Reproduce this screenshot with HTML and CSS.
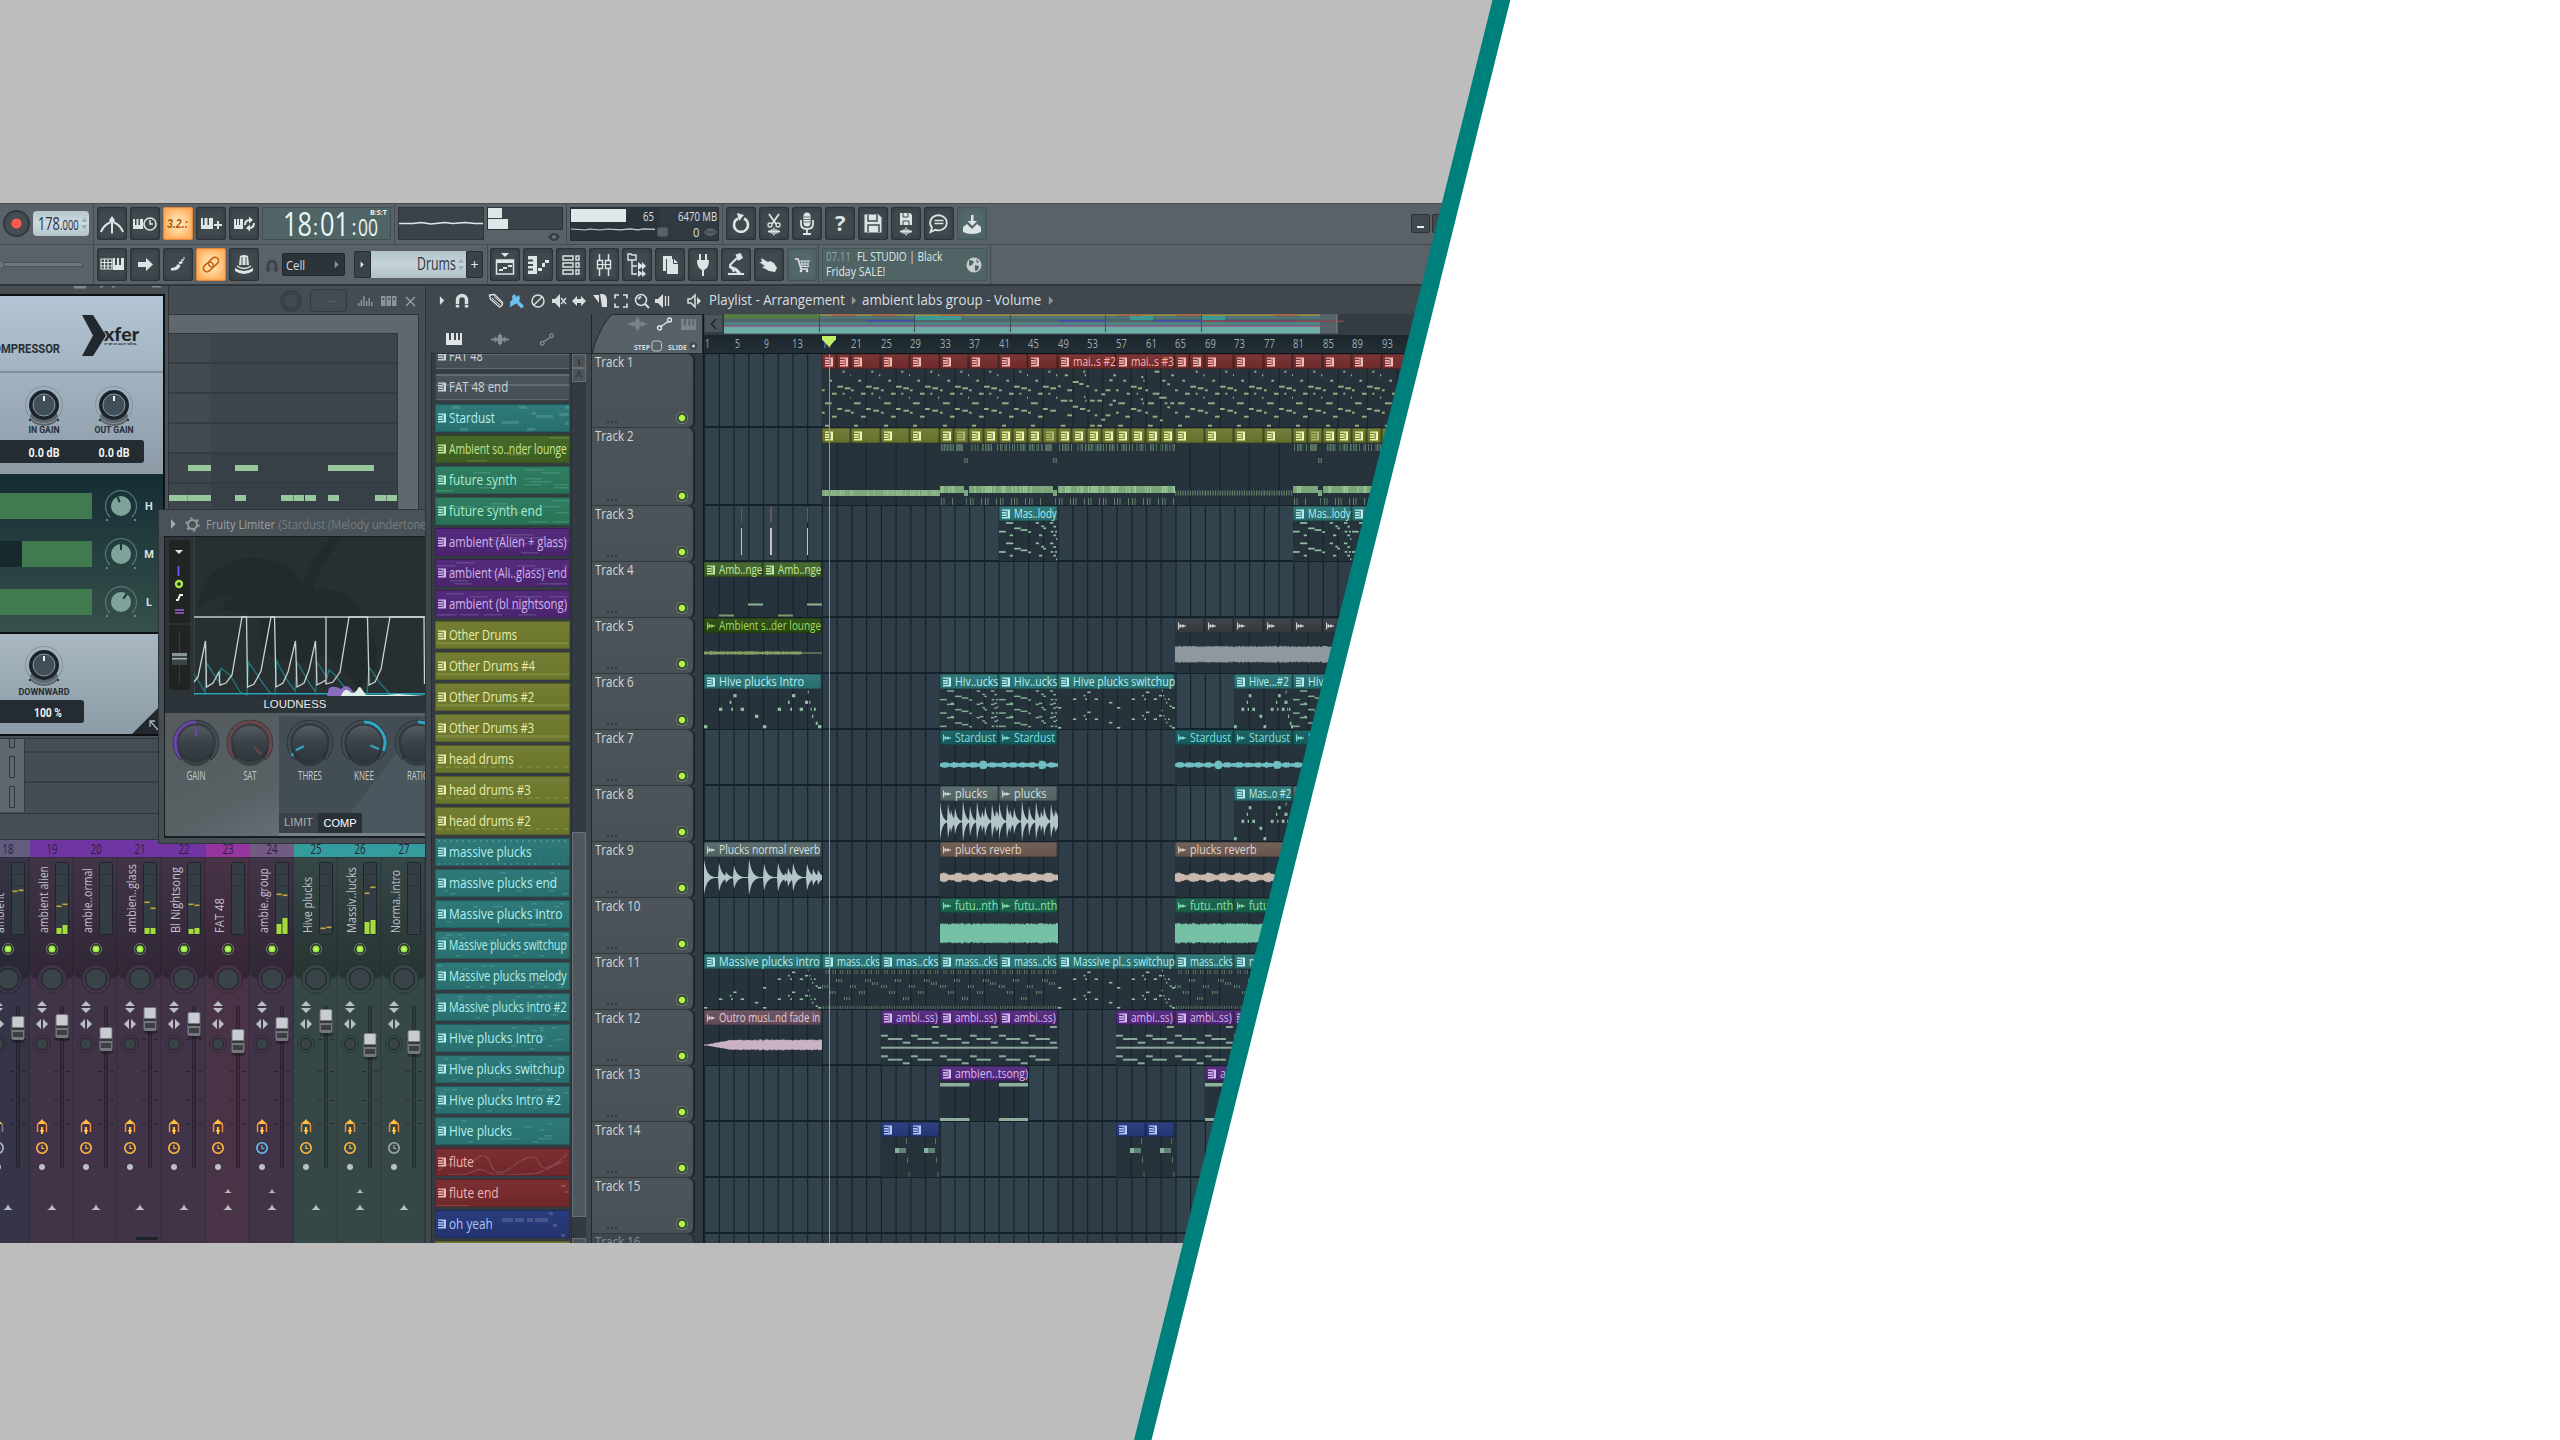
FILE: index.html
```html
<!DOCTYPE html>
<html lang="en">
<head>
<meta charset="utf-8">
<title>FL Studio - ambient labs group</title>
<link rel="stylesheet" href="styles.css">
</head>
<body>
<svg class="defs" aria-hidden="true">
  <symbol id="i-metro" viewBox="0 0 30 33"><path d="M4 25Q6.500 18 13 15.500M26 25Q23.500 18 17 15.500" fill="none" stroke="currentColor" stroke-width="2"/><path d="M15 9l3 4.500-2 3v10h-2v-10l-2-3z"/></symbol>
  <symbol id="i-keyclock" viewBox="0 0 30 33"><path d="M3 12h2v6h1.500v-6h2v6H10v-6h3v10H3z"/><circle cx="20" cy="17" r="6" fill="none" stroke="currentColor" stroke-width="1.600"/><path d="M20 13v4h3" fill="none" stroke="currentColor" stroke-width="1.500"/></symbol>
  <symbol id="i-keyplus" viewBox="0 0 30 33"><path d="M5 11h2v7h1.500v-7h3v7H13v-7h4v11H5zM21 14h2v3h3v2h-3v3h-2v-3h-3v-2h3z"/></symbol>
  <symbol id="i-keyloop" viewBox="0 0 30 33"><path d="M5 12h2v6h1v-6h2v6h1v-6h3v10H5z"/><path d="M16 18q0-5 5-5M25 16q0 5-5 5" fill="none" stroke="currentColor" stroke-width="2"/><path d="M20 9.500l4 3.500-4 3.500zM21 17.500l-4 3.500 4 3.500z"/></symbol>
  <symbol id="i-gridkeys" viewBox="0 0 30 33"><path d="M4 11h11v10H4zM4 14.500h11M4 18h11M7.500 11v10M11 11v10" fill="none" stroke="currentColor" stroke-width="1.200"/><path d="M16 10h2v7h2v-7h2v7h2v-7h3v12H16z"/></symbol>
  <symbol id="i-arrow" viewBox="0 0 30 33"><path d="M8 14h8v-4l7 6.500-7 6.500v-4H8z"/></symbol>
  <symbol id="i-slide" viewBox="0 0 30 33"><path d="M8 20q5 0 6.500-4l3 1.500q-1.500 5.500-9.500 5z"/><path d="M15.500 14l3.500-1 1 2-3.500 1.500zM18 11.500l2.500-.5.500 1.500-2.500.5zM20 9.500h2v1h-2z"/></symbol>
  <symbol id="i-link" viewBox="0 0 30 33"><g fill="none" stroke="currentColor" stroke-width="1.600" transform="rotate(-42 15 16.500)"><rect x="6" y="13" width="11" height="7" rx="3.500"/><rect x="13" y="13" width="11" height="7" rx="3.500"/></g></symbol>
  <symbol id="i-hat" viewBox="0 0 30 33"><path d="M11 8q4-2 8 0l1 9H10z"/><path d="M6 20q9 6 18 0v3q-9 6-18 0z"/><path d="M13 9v9M17 9v9" stroke="#4a5358" stroke-width="1"/><path d="M8 18q7 5 14 0" fill="none" stroke="currentColor" stroke-width="1.500"/></symbol>
  <symbol id="i-magnet" viewBox="0 0 16 16"><path d="M3.500 14.500V7a4.500 4.500 0 0 1 9 0v7.500" fill="none" stroke="currentColor" stroke-width="3.400"/><path d="M1 11.500h14" stroke="#40484e" stroke-width=".8"/></symbol>
  <symbol id="i-undo" viewBox="0 0 30 33"><path d="M18 11.500a7 7 0 1 1-6 0" fill="none" stroke="currentColor" stroke-width="2.500"/><path d="M11 6l7 2-5 6z"/></symbol>
  <symbol id="i-cut" viewBox="0 0 30 33"><path d="M10 7l7 10M20 7l-7 10" stroke="currentColor" stroke-width="1.800"/><circle cx="11" cy="18" r="2" fill="none" stroke="currentColor" stroke-width="1.300"/><circle cx="19" cy="18" r="2" fill="none" stroke="currentColor" stroke-width="1.300"/><path d="M9 24.500h12M11 23v3M13 22v5M15 20.500v8M17 22v5M19 23v3" stroke="currentColor" stroke-width="1.300"/></symbol>
  <symbol id="i-mic" viewBox="0 0 30 33"><rect x="11.500" y="5.500" width="7" height="14" rx="3.500"/><path d="M9 13v4q0 5 6 5t6-5v-4M15 22v4M11 27h8" fill="none" stroke="currentColor" stroke-width="1.800"/><path d="M12 10h6M12 12.500h6M12 15h6" stroke="#4a5358" stroke-width=".8"/></symbol>
  <symbol id="i-save" viewBox="0 0 30 33"><path d="M6.500 7.500h14l3 3v15h-17z"/><path d="M10 8v6h9V8M10 25v-7h11v7" fill="none" stroke="#41494e" stroke-width="1.500"/></symbol>
  <symbol id="i-savewav" viewBox="0 0 30 33"><path d="M9 6h10l2 2v10H9z"/><path d="M12 6v4h5V6M12 18v-4h6v4" fill="none" stroke="#41494e"/><path d="M9 24.500h12M11 23v3M13 22v5M15 20.500v8M17 22v5M19 23v3" stroke="currentColor" stroke-width="1.300"/></symbol>
  <symbol id="i-chat" viewBox="0 0 30 33"><path d="M6.500 25l1.500-4.500a8.300 7.500 0 1 1 3.500 2.300z" fill="none" stroke="currentColor" stroke-width="1.800"/><path d="M10.500 13.500h9M10.500 16.500h9" stroke="currentColor" stroke-width="1.500"/></symbol>
  <symbol id="i-down" viewBox="0 0 30 33"><path d="M14 8h2.500v6H20l-4.700 5L10.500 14H14zM6 20l4-3 5 5 5-5 4 3v5q-9 4-18 0z"/></symbol>
  <symbol id="i-playlist" viewBox="0 0 30 33"><path d="M11 5h8l-4 4z"/><path d="M6.500 12h17v14h-17z" fill="none" stroke="currentColor" stroke-width="1.500"/><path d="M6 12h18v3H6zM9 21h4v2H9zM13 19h4v2h-4zM18 17h4v2h-4z"/></symbol>
  <symbol id="i-proll" viewBox="0 0 30 33"><path d="M5 8h9v18H5v-3.500h5v-2H5v-2.500h5v-2H5v-2.500h5v-2H5zM15 20h4v3h-4zM19 15h3v4h-3zM22 12h4v3h-4z"/></symbol>
  <symbol id="i-rack" viewBox="0 0 30 33"><path d="M7 8h10v4H7zM7 15h10v4H7zM7 22h10v4H7zM20 8h3v4h-3zM20 15h3v4h-3zM20 22h3v4h-3z" fill="none" stroke="currentColor" stroke-width="1.400"/></symbol>
  <symbol id="i-mixer" viewBox="0 0 30 33"><path d="M10.500 6v22M19.500 6v22" stroke="currentColor" stroke-width="1.500"/><path d="M8.500 12.500h5v8h-5zM16.500 12.500h5v8h-5z" fill="#41494e" stroke="currentColor" stroke-width="1.400"/><path d="M8 16.500h14" stroke="currentColor"/></symbol>
  <symbol id="i-tree" viewBox="0 0 30 33"><path d="M6 6h3l1 1h4v5H6zM10 12v14h5M10 18h5" fill="none" stroke="currentColor" stroke-width="1.400"/><path d="M16 14l4 3v-3l4 4-4 4v-3l-4 3zM16 22l4 3v-3l4 4-4 3v-3l-4 3z"/></symbol>
  <symbol id="i-docs" viewBox="0 0 30 33"><path d="M8 8h9v3h-6v12H8z"/><path d="M12 11h7l4 4v11H12z"/><path d="M18.500 11v4.500H23" fill="none" stroke="#41494e"/></symbol>
  <symbol id="i-plug" viewBox="0 0 30 33"><path d="M11 6h2v6h4V6h2v6h2q0 8-5 10v6h-2v-6q-5-2-5-10h2z"/></symbol>
  <symbol id="i-lamp" viewBox="0 0 30 33"><path d="M14.500 6.500l5-1.500 2.500 5-5 3z"/><path d="M16 10l-7 7 4 7" fill="none" stroke="currentColor" stroke-width="2"/><path d="M8 18q8 0 12 7h3v2H7v-2h9q-3-4-8-5z"/></symbol>
  <symbol id="i-hand" viewBox="0 0 30 33"><path d="M7 10l7 4 2-1 4 2 3 5-2 4-6-1-7-4 3-1-6-4 3 0z"/></symbol>
  <symbol id="i-cart" viewBox="0 0 30 33"><path d="M8 11h3l3 10h7" fill="none" stroke="currentColor" stroke-width="1.500"/><path d="M12 13h11M13 16h9M14 18.500h8M15 13v6M18 13v6M21 13v6" stroke="currentColor"/><circle cx="14" cy="23" r="1.300"/><circle cx="20" cy="23" r="1.300"/></symbol>
  <symbol id="i-keys" viewBox="0 0 16 12"><path d="M0 0h3v7h2V0h3v7h2V0h2v7h2V0h2v12H0z"/></symbol>
  <symbol id="i-wave" viewBox="0 0 20 14"><path d="M0 7h20M2.500 6v2M4.500 4v6M6.500 5v4M8.500 2v10M10 0v14M11.500 2v10M13.500 5v4M15.500 4v6M17.500 6v2" stroke="currentColor" stroke-width="1.500"/></symbol>
  <symbol id="i-auto" viewBox="0 0 16 14"><g fill="none" stroke="currentColor" stroke-width="1.300"><circle cx="3" cy="11" r="2"/><circle cx="13" cy="3" r="2"/><path d="M4.500 9.500L11.500 4.500"/></g></symbol>
  <symbol id="i-pencil" viewBox="0 0 16 16"><path d="M1.500 2l5-.5 8 8q.5 3-3 4.500l-9-8z" fill="none" stroke="currentColor" stroke-width="1.400"/><path d="M4 5l8 7M6 3.500l8 7" stroke="currentColor"/></symbol>
  <symbol id="i-brush" viewBox="0 0 16 16"><path d="M3 3l3-2 1 3 3-2 1 4-1 2 5 5-2.500 2.500-5-5-2 1-5 3 1-4-1-1 3-3z"/></symbol>
  <symbol id="i-ban" viewBox="0 0 16 16"><circle cx="8" cy="8" r="6" fill="none" stroke="currentColor" stroke-width="1.500"/><path d="M4 12l8-8" stroke="currentColor" stroke-width="1.500"/></symbol>
  <symbol id="i-mute" viewBox="0 0 16 16"><path d="M1 6h3l5-5v14l-5-5H1z"/><path d="M10 5l5 6M15 5l-5 6" stroke="currentColor" stroke-width="1.400"/></symbol>
  <symbol id="i-lr" viewBox="0 0 16 16"><path d="M1 8l5-5v3h4V3l5 5-5 5v-3H6v3z"/></symbol>
  <symbol id="i-slice" viewBox="0 0 16 16"><path d="M1 2h6v8zM8 1h3q4 1 4 6v7h-5z"/></symbol>
  <symbol id="i-sel" viewBox="0 0 16 16"><path d="M2 5.500V2h4M10 2h4v3.500M14 10.500V14h-4M6 14H2v-3.500" fill="none" stroke="currentColor" stroke-width="1.700"/></symbol>
  <symbol id="i-mag" viewBox="0 0 16 16"><circle cx="7" cy="7" r="5.500" fill="none" stroke="currentColor" stroke-width="1.500"/><path d="M11 11l4 4M4 6l3-2.500" stroke="currentColor" stroke-width="2"/></symbol>
  <symbol id="i-play" viewBox="0 0 16 16"><path d="M1 6h3l5-5v14l-5-5H1z"/><path d="M11.500 3v10M14.500 3v10" stroke="currentColor" stroke-width="1.300"/></symbol>
  <symbol id="i-spk" viewBox="0 0 16 16"><path d="M2 6h3l4-4v12l-4-4H2z" fill="none" stroke="currentColor" stroke-width="1.500"/><path d="M11 4l4 4-4 4z"/></symbol>
  <symbol id="i-tri" viewBox="0 0 8 10"><path d="M1 0l5 5-5 5z"/></symbol>
  <symbol id="i-globe" viewBox="0 0 16 16"><circle cx="8" cy="8" r="7.500"/><path d="M3 3q4 0 5 2l-2 3-3 1zM9 8l4 1-1 4-3 1zM10 2l3 3-2 1z" fill="#516465"/></symbol>
  <symbol id="i-pat" viewBox="0 0 9 10"><path d="M0 0h9v10H0V8.400h4.800V7.200H0V5.600h4.800V4.400H0V2.800h4.800V1.400H0z"/><path d="M5.800 1.400v7.200" stroke="#203a50" stroke-width=".9"/></symbol>
  <symbol id="i-aud" viewBox="0 0 9 8"><path d="M.7 0v8M1 4h8" stroke="currentColor" stroke-width="1.200"/><path d="M2 1.500L4.500 4 2 6.500zM5 1.500L7.500 4 5 6.500z"/></symbol>
</svg>

<main class="poster">
<div class="daw">
  <div class="bar top">
    <div class="grp g-rec"><span class="rec"></span><span class="tempo"><b data-w="22">178</b><i data-w="19">.000</i><span class="spin"></span></span></div>
    <div class="grp g-trans" id="btnsA"></div>
    <div class="grp g-scope"><svg class="scope" viewBox="1 1 84 31"><path d="M1 16.500h14l8-1 10 1.500 14-1.500 8 1 12-1 10 1h8" fill="none" stroke="#dfe9e9" stroke-width="1.300"/></svg>
      <div class="peak"><div class="peakbox"><span></span><span></span></div><svg viewBox="0 0 12 10"><path d="M0 5q6-8 12 0-6 8-12 0z" fill="#363e44"/><circle cx="6" cy="5" r="2" fill="#6a7378"/></svg></div></div>
    <div class="grp g-cpu"><div class="cpu"><svg viewBox="0 0 85 33"><rect x="0" y="1" width="55" height="13" fill="#e0e8ea"/><path d="M0 21l8 .5 6 .5 5-1 10 1 8-1 12 .8 10-1 8 1 6-1 11 .5" fill="none" stroke="#c8d4d6" stroke-width="1.200"/></svg><em class="c65" data-w="11">65</em><div class="mem"><span data-w="39">6470 MB</span><span class="zero" data-w="6">0</span></div><svg class="chips" viewBox="0 0 62 14"><path d="M1 3h9v8H1zM0 5h11M0 8h11" fill="#59626a" stroke="#59626a"/><path d="M47 7q3-3 5-4 2 1 3 0 2 1 5 4-3 4-7 4t-6-4z" fill="#59626a"/><path d="M49 7h9" stroke="#323a41"/></svg></div></div>
    <div class="grp g-file" id="btnsB"></div>
    <div class="win"><span><i></i></span><span><i class="mx"></i></span></div>
  </div>
  <div class="bar low">
    <div class="grp g-rec"><span class="groove"></span></div>
    <div class="grp g-trans"><div class="row3" id="btnsC"></div><svg class="mg"><use href="#i-magnet"/></svg><span class="cell"><b data-w="19">Cell</b><svg class="t"><use href="#i-tri"/></svg></span>
      <div class="patt"><span class="pb"><svg class="t"><use href="#i-tri"/></svg></span><span class="pn"><b data-w="39">Drums</b><span class="spin"></span></span><span class="pb">+</span></div></div>
    <div class="grp g-views" id="btnsD"></div>
    <div class="grp g-hint"><div class="hint"><p><span class="dim" data-w="25">07.11</span><span data-w="85">FL STUDIO | Black</span></p><p><span data-w="59">Friday SALE!</span></p><svg class="globe"><use href="#i-globe"/></svg></div></div>
  </div>

  <div class="work">
    <div class="desk">
      <section class="mixer" id="mixer"></section>
      <section class="step" id="step"></section>
      <section class="steplow"><div class="lights"><i></i><i></i><i></i></div><div class="lanes3"><i></i><i></i><i></i></div></section>
      <section class="ott" id="ott"></section>
      <section class="limiter" id="limiter"></section>
    </div>
    <div class="arr">
      <div class="arrhead" id="arrhead"></div>
      <div class="arrbody">
        <div class="picker">
          <div class="ptabs"><svg class="on"><use href="#i-keys"/></svg><svg><use href="#i-wave"/></svg><svg><use href="#i-auto"/></svg></div>
          <div class="pbody"><div class="plist" id="picklist"></div><div class="pscroll"><i class="b">ı</i><i class="b">^</i><i class="thumb"></i><i class="b2"></i></div></div>
        </div>
        <div class="tracks">
          <svg class="tab" viewBox="0 0 111 40"><path d="M0.500 39.500Q2 30 8 18T20 .5H110.500V39.500z" fill="#586168" stroke="#20292f"/><g fill="#7b858b" color="#7b858b"><use href="#i-wave" x="36" y="3" width="19" height="14"/><use href="#i-keys" x="89" y="5" width="15" height="11"/></g><use href="#i-auto" x="64" y="3" width="17" height="14" color="#e8eef0"/><text x="42" y="35.500" textLength="16" lengthAdjust="spacingAndGlyphs">STEP</text><rect x="60" y="27" width="9.500" height="10" rx="2.500" fill="none" stroke="#c2c9cc"/><text x="76" y="35.500" textLength="19" lengthAdjust="spacingAndGlyphs">SLIDE</text><circle cx="101.500" cy="32" r="4" fill="#42494e"/><circle cx="101.500" cy="32" r="1.500" fill="#d5dadd"/></svg>
          <div id="theads"></div>
        </div>
        <div class="lanescol">
          <div class="mini" id="mini"></div>
          <div class="ruler" id="ruler"></div>
          <div class="lanes" id="lanes"></div>
        </div>
      </div>
    </div>
  </div>
</div>
</main>
<div class="stripe"></div>
<script src="app.js"></script>
</body>
</html>
```
FILE: styles.css
```css
* { box-sizing: border-box; }
body { margin: 0; width: 2560px; height: 1440px; overflow: hidden; background: #fff; position: relative; font-family: "Open Sans", "Noto Sans", sans-serif; color: #d5dbdd; }
.defs { position: absolute; width: 0; height: 0; }
svg { display: block; fill: currentColor; overflow: hidden; }
b, i, em { font-style: normal; font-weight: 400; }
[data-w] { display: inline-block; white-space: nowrap; transform-origin: 0 50%; flex: none; }
.poster { width: 1512px; height: 1440px; padding-top: 203px; background: #bdbdbd; clip-path: polygon(0 0, 1495px 0, 1137px 1440px, 0 1440px); }
.stripe { position: absolute; inset: 0; background: #00807c; clip-path: polygon(1492.500px 0, 1510.300px 0, 1151.500px 1440px, 1134px 1440px); }
.daw { width: 1512px; height: 1040px; background: #40484e; display: flex; flex-direction: column; overflow: hidden; }

/* toolbars */
.bar { display: flex; background: #5a6268; flex: none; }
.top { height: 42px; border-top: 1px solid #454d53; border-bottom: 1px solid #454d53; }
.low { height: 41px; border-bottom: 2px solid #30373c; }
.grp { display: flex; align-items: center; gap: 3px; border-right: 1px solid #434b51; flex: none; }
.g-rec { width: 94px; padding-left: 3px; }
.g-trans { width: 301px; padding-left: 3px; }
.low .g-trans { width: 394px; gap: 0; }
.g-scope { width: 172px; padding-left: 3px; }
.g-cpu { width: 156px; padding-left: 3px; }
.g-file { padding-left: 3px; width: 268px; border: 0; }
.g-views { width: 331px; padding-left: 2px; }
.g-hint { width: 172px; padding-left: 3px; }
.row3 { display: flex; gap: 3px; }
.btn { width: 30px; height: 33px; border-radius: 2px; background: #41494e; border: 1px solid #2b3338; box-shadow: inset 0 0 5px #2f373c; color: #dde4e6; flex: none; display: block; }
.btn svg { width: 30px; height: 33px; margin: -1px; overflow: visible; }
.btn.hot { background: radial-gradient(#fff0c0, #ffb668 75%); border-color: #e5873a; box-shadow: inset 0 0 3px #ff8a30; color: #c65f10; }
.btn.teal { background: #54686a; border-color: #41565a; box-shadow: inset 0 0 5px #43575a; }
.btn text { font: italic 700 13px "Liberation Sans"; fill: #b85510; }
.btn .q { font: 700 22px "Open Sans"; fill: #dde4e6; }
.top .grp { padding-bottom: 1px; }
.rec { width: 27px; height: 27px; border-radius: 50%; background: radial-gradient(#ff5a50 0 4.500px, #454d52 5.500px 11px, #30383d 12px); flex: none; }
.tempo { width: 56px; height: 25px; border-radius: 4px; background: linear-gradient(#b7c7cf, #cedae0 50%, #b3c3cb); color: #28323a; display: flex; align-items: baseline; padding-left: 5px; font-size: 19px; line-height: 25px; }
.tempo i { font-size: 14px; }
.spin { margin-left: 3px; width: 6px; height: 11px; align-self: center; background: #97a7b0; clip-path: polygon(50% 0, 100% 35%, 0 35%, 0 65%, 100% 65%, 50% 100%, 0 65%, 0 35%); }
.lcd { width: 129px; height: 33px; background: #516465; border: 1px solid #3f5053; flex: none; overflow: visible; }
.lcd text { font-family: "Open Sans"; fill: #eaf6f5; }
.scope { width: 86px; height: 33px; background: #3b434a; border: 1px solid #2c343a; flex: none; }
.peak { width: 76px; height: 33px; }
.peak > svg { width: 12px; height: 10px; margin: 2px 3px 0 auto; }
.peakbox { height: 23px; background: #3b434a; border: 1px solid #2c343a; }
.peakbox span { display: block; height: 10px; width: 14px; background: #dfe6e7; margin-bottom: 1px; }
.peakbox span + span { width: 20px; }
.cpu { width: 149px; height: 34px; background: #2b333b; border: 1px solid #262e34; display: flex; font-size: 13px; line-height: 16px; color: #d9e0e2; position: relative; }
.cpu svg { width: 85px; height: 33px; flex: none; }
.cpu .chips { position: absolute; width: 62px; height: 14px; left: 86px; bottom: 1px; }
.c65 { position: absolute; left: 72px; top: 0; }
.mem { margin-left: 4px; flex: 1; background: #323a41; padding-left: 18px; min-width: 0; }
.mem span { display: block; width: max-content; }
.mem .zero { margin-left: 15px; }
.win { display: flex; gap: 2px; margin: 10px 0 0 420px; }
.win span { width: 19px; height: 19px; background: #41494e; border: 1px solid #2b3338; border-radius: 2px; padding: 11px 5px 0; }
.win i { display: block; height: 2px; background: #e8eef0; }
.win .mx { height: 8px; margin-top: -6px; background: none; border: 2px solid #e8eef0; }
.groove { width: 80px; height: 5px; background: #6d757a; border: 1px solid #4a5257; box-shadow: -4px 0 #6d757a; }
.mg { width: 14px; height: 14px; color: #3b4348; margin: 2px 3px 0 6px; }
.cell { width: 63px; height: 23px; background: #2c343a; border: 1px solid #22292e; border-radius: 2px; font-size: 13px; line-height: 20px; padding: 0 4px 0 3px; display: flex; justify-content: space-between; align-items: center; }
.t { width: 6px; height: 9px; color: #8a9499; }
.patt { display: flex; margin-left: 9px; height: 27px; }
.pb { width: 17px; background: #3a4247; border: 1px solid #262e33; border-radius: 2px; display: flex; align-items: center; justify-content: center; font-size: 14px; color: #e5ebed; }
.pb .t { color: #e5ebed; width: 5px; }
.pn { width: 95px; background: linear-gradient(#b3c3cb, #c6d4da 50%, #b0c0c8); color: #2a343b; font-size: 18px; line-height: 25px; display: flex; justify-content: flex-end; padding-right: 2px; }
.pn .spin { margin-left: 2px; }
.hint { width: 165px; height: 33px; background: #516465; border: 1px solid #43575a; position: relative; padding: 0 3px; font-size: 12.500px; line-height: 15px; color: #dfe7e6; }
.hint p { margin: 0; display: flex; gap: 6px; }
.hint .dim { color: #93a2a2; }
.globe { position: absolute; width: 16px; height: 16px; right: 4px; top: 8px; color: #c3cfce; }

/* desktop of plugin windows */
.work { display: flex; flex: 1; min-height: 0; }
.desk { width: 425px; position: relative; overflow: hidden; background: #464e54; flex: none; }
.desk section { position: absolute; overflow: hidden; }
.desk .mixer { left: -14px; top: 554px; width: 440px; height: 403px; display: flex; }
.strip { width: 44px; flex: none; }
.strip header { height: 17px; text-align: center; font-size: 14px; line-height: 18px; color: #2a2038; }
.strip header span { transform-origin: 50% 50%; }
.strip svg { width: 44px; height: 386px; }
.step { left: 168px; top: 0; width: 257px; height: 230px; background: #454d54; border-left: 1px solid #2d353b; }
.steplow { left: 0; top: 452px; width: 160px; height: 102px; display: flex; border-top: 1px solid #2e363c; background: linear-gradient(#454d54 74px, #2e363c 74px 75px, #464e54 75px); border-bottom: 1px solid #2e363c; }
.lights { width: 25px; height: 73px; background: #5f676f; border-right: 1px solid #343c42; padding: 0 0 0 9px; overflow: hidden; flex: none; }
.lights i { display: block; width: 6px; height: 22px; border: 1px solid #2d353b; border-radius: 1px; margin-bottom: 8px; }
.lights i:first-child { margin-top: -13px; }
.lanes3 i { display: block; width: 135px; height: 30px; border-bottom: 2px solid #363e44; }
.lanes3 i:first-child { height: 14px; }
.lanes3 i:last-child { border: 0; }
.ott { left: 0; top: 0; width: 168px; height: 451px; background: #4b5359; }
.limiter { left: 158px; top: 223px; width: 267px; height: 335px; background: #464e53; border: 1px solid #2d353b; border-right: 0; }

/* playlist */
.arr { flex: 1; display: flex; flex-direction: column; border-left: 1px solid #2b3338; background: #40484e; min-width: 0; }
.arrhead { height: 28px; display: flex; align-items: center; color: #d9dfe1; font-size: 14.500px; flex: none; padding: 1px 0 0 13px; line-height: 24px; }
.arrhead span { position: relative; top: -1px; }
.arrhead .i { width: 16px; height: 16px; margin: 0 2.400px; flex: none; }
.arrhead .blue { color: #6fc0ee; }
.arrhead .tt { width: 7px; height: 9px; flex: none; }
.arrhead .tt ~ .tt { color: #8b959a; }
.arrbody { flex: 1; display: flex; min-height: 0; }
.picker { width: 166px; flex: none; border-right: 1px solid #20292f; display: flex; flex-direction: column; }
.ptabs { height: 39px; display: flex; padding: 19px 0 0 20px; gap: 29px; color: #868f94; flex: none; }
.ptabs svg { width: 18px; height: 13px; }
.ptabs .on { width: 16px; height: 12px; color: #dfe5e7; }
.pbody { flex: 1; display: flex; min-height: 0; margin-left: 5px; border-top: 1px solid #262e34; border-left: 1px solid #262e34; background: #343c42; overflow: hidden; }
.plist { width: 139px; padding-left: 3px; overflow: hidden; flex: none; }
.pi { width: 135px; height: 28px; margin-bottom: 3px; border: 1px solid #0003; display: flex; align-items: center; gap: 3px; padding-left: 2px; font-size: 15px; line-height: 24px; position: relative; overflow: hidden; }
.pi:first-child { margin-top: -12px; }
.pi span { position: relative; top: -1px; }
.pi .ico { width: 8px; height: 10px; flex: none; margin-top: -1px; }
.pi .bg { position: absolute; inset: 0; width: 135px; height: 28px; opacity: .14; }
.pscroll { width: 15px; border-left: 1px solid #262e34; background: #333b41; display: flex; flex-direction: column; flex: 1; border-right: 5px solid #40484e; }
.pscroll .b { height: 14px; background: #4c545a; border: 1px solid #697177; line-height: 13px; text-align: center; font-size: 12px; color: #20282d; flex: none; }
.pscroll .thumb { margin-top: 450px; height: 385px; background: #4f585e; border: 1px solid #6a7278; flex: none; }
.pscroll .b2 { margin-top: 21px; height: 14px; background: #4c545a; border: 1px solid #697177; flex: none; }
.tracks { width: 112px; flex: none; background: #2f3a41; overflow: hidden; border-right: 1px solid #10191f; }
.tab { width: 111px; height: 40px; background: #40484e; }
.tab text { font: 700 7px "Open Sans"; fill: #d3d9dc; }
.th { width: 101px; background: linear-gradient(#4c545a, #495157); border-radius: 0 6px 6px 0; border-bottom: 1px solid #333c42; position: relative; padding: 0 0 0 3px; font-size: 15px; line-height: 15px; color: #d2d8da; box-shadow: 2px 0 1px #1d262c; }
.led { position: absolute; right: 6px; bottom: 4px; width: 10px; height: 10px; border-radius: 50%; background: radial-gradient(#b4f25a 0 2.500px, #6fb52c 3.200px, #27361f 4px); box-shadow: 0 0 0 1px #7a8386; }
.dots { position: absolute; left: 15px; bottom: 4px; width: 11px; height: 2px; background: repeating-linear-gradient(90deg, #333b41 0 2px, transparent 2px 4px); }
.lanescol { flex: 1; min-width: 0; display: flex; flex-direction: column; }
.mini { height: 21px; background: #353d43; flex: none; }
.ruler { height: 19px; background: linear-gradient(#1b252c, #232f36); flex: none; position: relative; font-size: 12px; line-height: 18px; color: #9dabb1; border-bottom: 1px solid #0f171c; }
.ruler span { position: absolute; top: 0; }
.lanes { flex: 1; position: relative; overflow: hidden; background: #33434e; }
.lane { position: relative; border-bottom: 2px solid #14222b; }
.clip { position: absolute; top: 0; bottom: -1px; background: #27333bf2; overflow: hidden; }
.clip header { height: 15px; display: flex; align-items: center; gap: 4px; padding-left: 3px; font-size: 13px; line-height: 15px; border-radius: 2px; box-shadow: inset 0 0 0 1px #0003; border-right: 1px solid #15202688; background-image: linear-gradient(#ffffff0c, #0001); }
.clip header span { position: relative; top: -.5px; }
.clip .ico { width: 8px; height: 10px; flex: none; }
.clip .aud { height: 8px; }
.head { position: absolute; left: 125px; top: 0; width: 1px; height: 100%; background: #87979f; }
.mark { position: absolute; left: 118px; top: 1px; width: 14px; height: 11px; background: #bfee67; clip-path: polygon(0 0, 100% 0, 100% 30%, 50% 100%, 0 30%); }
```
FILE: app.js
```js
const $ = id => document.getElementById(id);
const R = (x, y, w, h, f, extra = '') => `<rect x="${x}" y="${y}" width="${w}" height="${h}" fill="${f}" ${extra}/>`;
const T = (x, y, s, w, size, f, a = 'start', extra = '') =>
  `<text x="${x}" y="${y}" ${w ? `textLength="${w}" lengthAdjust="spacingAndGlyphs"` : ''} font-size="${size}" fill="${f}" text-anchor="${a}" ${extra}>${s}</text>`;
const use = (id, cls) => `<svg class="${cls}"><use href="#i-${id}"/></svg>`;
let seed = 7;
const rnd = () => (seed = (seed * 16807) % 2147483647) / 2147483647;

/* toolbar buttons */
const btn = (id, cls = '') => `<span class="btn ${cls}"><svg><use href="#i-${id}"/></svg></span>`;
$('btnsA').innerHTML = btn('metro') + btn('keyclock') +
  '<span class="btn hot"><svg viewBox="0 0 30 33"><text x="4" y="20.500" textLength="21" lengthAdjust="spacingAndGlyphs">3.2.:</text></svg></span>' +
  btn('keyplus') + btn('keyloop') +
  `<svg class="lcd" viewBox="1 1 127 31">${T(21, 28.500, '18', 29, 33, '')}${T(51, 28, ':', 5, 22, '')}${T(58, 28.500, '01', 29, 33, '')}${T(89.500, 28, ':', 5, 22, '')}${T(96, 28.500, '00', 20, 23, '')}${T(108, 8, 'B:S:T', 17, 7, '', 'start', 'font-weight="700"')}</svg>`;
$('btnsB').innerHTML = btn('undo') + btn('cut') + btn('mic') +
  '<span class="btn"><svg viewBox="0 0 30 33"><text class="q" x="10" y="24">?</text></svg></span>' +
  btn('save') + btn('savewav') + btn('chat') + btn('down', 'teal');
$('btnsC').innerHTML = btn('gridkeys') + btn('arrow') + btn('slide') + btn('link', 'hot') + btn('hat');
$('btnsD').innerHTML = ['playlist', 'proll', 'rack', 'mixer', 'tree', 'docs', 'plug', 'lamp', 'hand'].map(i => btn(i)).join('') + btn('cart', 'teal');

/* playlist title bar */
$('arrhead').innerHTML = use('tri', 'tt first') + '<span style="width:6px"></span>' + use('magnet', 'i') + '<span style="width:13px"></span>' +
  ['pencil', 'brush', 'ban', 'mute', 'lr', 'slice', 'sel', 'mag', 'play'].map(i => use(i, 'i' + (i === 'brush' ? ' blue' : ''))).join('') +
  '<span style="width:11px"></span>' + use('spk', 'i') +
  '<span style="width:4px"></span><span data-w="136">Playlist - Arrangement</span><span style="width:6px"></span>' + use('tri', 'tt') +
  '<span style="width:4px"></span><span data-w="179">ambient labs group - Volume</span><span style="width:7px"></span>' + use('tri', 'tt');

/* step sequencer window behind the plugins */
{
  let s = `<svg width="256" height="230" viewBox="169 286 256 230">` + R(169, 314, 250, 210, '#2e363c') + R(169, 315, 249, 210, '#5f676f') + R(169, 333, 229, 190, '#2f373d') + R(169, 334, 228, 190, '#3d454c') + R(169, 334, 42, 190, '#424a51') + R(169, 454, 228, 70, '#384047') + R(169, 454, 42, 70, '#3e464c');
  for (let y = 362; y < 490; y += 30) s += R(169, y, 228, 2, '#343c42');
  for (const [x, w] of [[188, 23], [235, 23], [328, 46]]) s += R(x, 465, w, 6, '#98c69d');
  for (const [x, w] of [[169, 18.7], [188, 23], [235, 11], [281, 12], [293.5, 10.5], [305, 11], [328, 11], [375, 11], [386.500, 10.500]]) s += R(x, 495, w, 6, '#98c69d');
  s += `<circle cx="291" cy="301" r="10" fill="none" stroke="#363e44" stroke-width="2"/><circle cx="291" cy="301" r="7.500" fill="#424a50" stroke="#2e363c"/><rect x="310.500" y="289.500" width="36" height="22" rx="4" fill="#434b51" stroke="#31393f"/>` + T(328, 302, '...', 8, 9, '#737c82');
  for (const [i, h] of [3, 6, 10, 5, 8, 4].entries()) s += R(358 + i * 2.6, 306 - h, 1.5, h, '#8a9398');
  for (let i = 0; i < 3; i++) s += R(381 + i * 5.500, 296, 4.500, 10, '#8a9398') + R(382.500 + i * 5.500, 298, 1.500, 2, '#454d54');
  s += `<path d="M406 297l9 9M415 297l-9 9" stroke="#9aa2a6" stroke-width="1.300"/></svg>`;
  $('step').innerHTML = s;
}

/* multiband compressor */
{
  const f = 'font-family="Roboto" font-weight="700"';
  const knob = (x, y) => `<ellipse cx="${x}" cy="${y + 12}" rx="14" ry="9" fill="#0006"/><circle cx="${x}" cy="${y}" r="18.500" fill="none" stroke="#8593a1"/><circle cx="${x}" cy="${y}" r="15" fill="#1d2329"/><circle cx="${x}" cy="${y}" r="11" fill="#414f5b" stroke="#8899a5"/><path d="M${x} ${y - 9}v5" stroke="#f0f4f6" stroke-width="2"/><circle cx="${x - 14}" cy="${y + 15}" r="1.200" fill="#333"/><circle cx="${x + 14}" cy="${y + 15}" r="1.200" fill="#333"/>`;
  const band = (y, x, a, l) => R(0, y - 13, 92, 26, '#162a2d') + R(x, y - 13, 92 - x, 26, '#427a50') +
    `<path d="M110 ${y + 11}A15.500 15.500 0 1 1 132 ${y + 11}" fill="none" stroke="#57777a" stroke-width="1.200"/><circle cx="121" cy="${y}" r="10" fill="#7fa39b"/><path d="M121 ${y - 10}v6" stroke="#1c3538" stroke-width="2" transform="rotate(${a} 121 ${y})"/><circle cx="107" cy="${y + 14}" r="1" fill="#7fa39b"/><circle cx="135" cy="${y + 14}" r="1" fill="#7fa39b"/>` + T(149, y + 4, l, 0, 11, '#cfe3e0', 'middle', f);
  $('ott').innerHTML = `<svg width="168" height="451" viewBox="0 286 168 451"><defs><linearGradient id="sky" x2="0" y2="1"><stop stop-color="#b3c5d4"/><stop offset="1" stop-color="#8c9ba6"/></linearGradient><linearGradient id="sky2" x2="0" y2="1"><stop stop-color="#a8b7c2"/><stop offset="1" stop-color="#8b9ca7"/></linearGradient><linearGradient id="sea" x2="0" y2="1"><stop stop-color="#152d35"/><stop offset="1" stop-color="#36504a"/></linearGradient></defs>` +
    R(0, 286, 168, 8, '#474f55') + R(74, 286, 12, 2.500, '#80888c') + R(100, 286, 3, 1.500, '#80888c') + R(112, 286, 3, 1.500, '#80888c') + R(152, 286, 9, 1.500, '#80888c') +
    R(0, 294, 165, 442, '#0d1114') + R(0, 296, 163, 178, 'url(#sky)') + R(0, 371, 163, 2, '#8090a0') +
    T(60, 353, 'COMPRESSOR', 74, 12.5, '#272e34', 'end', f) +
    `<path d="M82 315h11l13 20.500L93 356H82l11-20.500z" fill="#22282d"/>` + T(104, 341, 'xfer', 35, 19, '#22282d', 'start', 'font-family="Lato" font-weight="900"') + T(104, 344.500, 'records', 33, 4, '#45505a', 'start', 'font-weight="700"') +
    knob(44, 405) + knob(114, 405) + T(44, 432.500, 'IN GAIN', 31, 8.5, '#252d33', 'middle', f) + T(114, 432.500, 'OUT GAIN', 39, 8.5, '#252d33', 'middle', f) +
    R(-5, 440, 149, 23, '#242b31', 'rx="3"') + T(44, 457, '0.0 dB', 31, 12, '#eef3f5', 'middle', f) + T(114, 457, '0.0 dB', 31, 12, '#eef3f5', 'middle', f) +
    R(0, 474, 163, 158, 'url(#sea)') + band(506, 0, -20, 'H') + band(554, 22, 0, 'M') + band(602, 0, 35, 'L') +
    R(0, 634, 163, 100, 'url(#sky2)') + knob(44, 665) + T(44, 694.500, 'DOWNWARD', 51, 8.5, '#252d33', 'middle', f) +
    R(-5, 700, 89, 23, '#242b31', 'rx="3"') + T(48, 717, '100 %', 28, 12, '#eef3f5', 'middle', f) +
    `<path d="M132 734L163 703v31z" fill="#22282d"/><path d="M151 722l7 8M150 727v-6h5" fill="none" stroke="#aab6be" stroke-width="1.300"/></svg>`;
}

/* limiter */
{
  const c = 'font-family="Open Sans"';
  const pol = (x, y, r, a) => { a = a * Math.PI / 180; return (x + r * Math.sin(a)).toFixed(1) + ' ' + (y - r * Math.cos(a)).toFixed(1); };
  const arc = (x, y, r, a, b, col, w) => `<path d="M${pol(x, y, r, a)}A${r} ${r} 0 ${b - a > 180 ? 1 : 0} 1 ${pol(x, y, r, b)}" fill="none" stroke="${col}" stroke-width="${w}"/>`;
  const knob = (x, col, a, b, p, l, w) => arc(x, 743, 21, -138, 138, '#2d353b', 4.5) + arc(x, 743, 21, -136, 136, '#454d54', 2.5) + arc(x, 743, 21, a, b, col, 3) +
    `<ellipse cx="${x}" cy="748" rx="18" ry="18" fill="#1e252a88"/><circle cx="${x}" cy="743" r="18" fill="url(#kn)" stroke="#2b3238"/><path d="M${pol(x, 743, 7, p)}L${pol(x, 743, 16, p)}" stroke="${col}" stroke-width="2.200"/>` + T(x, 780, l, w, 12, '#c5cbce', 'middle', c);
  $('limiter').innerHTML = `<svg width="266" height="334" viewBox="159 510 266 334"><defs><linearGradient id="kn" x2="0" y2="1"><stop stop-color="#555d63"/><stop offset=".5" stop-color="#3a4248"/><stop offset="1" stop-color="#30383d"/></linearGradient><linearGradient id="pan" x2="1" y2="1"><stop stop-color="#545a5d"/><stop offset=".5" stop-color="#596165"/><stop offset="1" stop-color="#71808a"/></linearGradient></defs>` +
    R(159, 510, 266, 26, '#4a5258') +
    `<path d="M171 519l4.500 5-4.500 5z" fill="#a3abaf"/><circle cx="192.500" cy="524.500" r="4.500" fill="none" stroke="#9099a0" stroke-width="2"/><circle cx="192.500" cy="524.500" r="6.300" fill="none" stroke="#9099a0" stroke-width="1.800" stroke-dasharray="2.600 4"/>` +
    T(206, 529, 'Fruity Limiter', 69, 13, '#98a0a5', 'start', c) + T(278.500, 529, '(Stardust (Melody undertone', 148, 13, '#747d83', 'start', c) +
    R(164, 536, 270, 302, '#171d20') + R(165, 537, 270, 176, '#2b3238') + R(169, 540, 21, 83, '#222424', 'rx="2"') + R(169, 625, 21, 65, '#222424', 'rx="2"') +
    R(194, 537, 231, 160, '#272f31') + R(194, 537, 1, 160, '#3a4446') +
    `<path d="M199 606C200 570 238 550 272 561Q295 567 302 583 310 560 332 537h12Q318 566 313 590C340 586 356 600 362 616q14 26 15 36 0 25-20 35-16-30-36-31-30 16-55-4-9-12-6-30-15-14-41-12 8-10 14-14-18-2-34 10z" fill="#222a2c"/>` +
    `<path d="M175 550h8l-4 4z" fill="#dde4e6"/><path d="M178.500 566v10" stroke="#6f5cf0" stroke-width="1.800"/><circle cx="179" cy="584" r="3" fill="none" stroke="#a5e84f" stroke-width="2.400"/><path d="M176 600h2l2-5h3" fill="none" stroke="#eef3e0" stroke-width="2"/><path d="M175 610h9M175 613h9" stroke="#9b62d8" stroke-width="1.400"/><path d="M179.500 631v53" stroke="#353b3f"/>` +
    R(172, 653, 15, 12, '#3b4447') + R(172, 653, 15, 3, '#8a9496') + R(172, 658, 15, 1.500, '#a8b2b4') +
    R(194, 616, 231, 2, '#9ba4a5') +
    `<path d="M194 674L205 692L206.500 663L213 673L219 682L221 668L230 675L240 692L247 695L248.500 662L262 682L270 693L275 694L276.500 661L287 680L295 691L297 662L310 684L315.500 692L317 662L327 678L329 670L335 675L345 688L355 693L367 694L369 667L380 683L390 694H425" fill="none" stroke="#237379" stroke-width="1.400"/>` +
    `<path d="M194 682L198 677L205.500 641L206.500 687L213 683L219 672L220 685L226 683L232 675L242 617H246.500L247.500 687L254 684L261 671L271 617H274.500L276 687L283 683L288 672L295.500 641L297 687L304 683L309 670L315.500 641L317 685L326 680V617V684L333 682L340 672L349 617H367.500L369 685L375 682L381 669L390 617H424L424.500 684" fill="none" stroke="#ccd2d3" stroke-width="1.300"/>` +
    R(194, 693, 231, 1.500, '#2aa2b8') + `<path d="M327 696l2-8q5-3 12 1 5-6 10 0l5 7z" fill="#8a6cc0"/><path d="M341 696q4-10 9-4 4 3 7-2 2-5 4-2l5 7 20 0 12-1 27 2z" fill="#dff0e4"/>` +
    T(295, 708, 'LOUDNESS', 63, 11.5, '#e6eaeb', 'middle', 'font-family="Liberation Sans"') +
    R(165, 713, 260, 123, 'url(#pan)') + R(279, 716, 150, 117, '#434d54') + `<path d="M425 716v117h-90z" fill="#55636b77"/>` + R(279, 833, 150, 3, '#76828a') +
    knob(196, '#6d43ad', -136, 0, 0, 'GAIN', 19) + knob(250, '#6c4648', -136, 136, 136, 'SAT', 13) + knob(310, '#2fa7c2', -128, -120, -117, 'THRES', 24) + knob(364, '#2fa7c2', 0, 112, 112, 'KNEE', 20) + knob(418, '#2fa7c2', 0, 80, 90, 'RATIO', 22) +
    R(279, 813, 39, 20, '#3a4147') + R(318, 813, 44, 20, '#2a3136') + T(298.500, 826, 'LIMIT', 29, 11.500, '#a9b0b4', 'middle', 'font-family="Liberation Sans"') + T(340, 827, 'COMP', 33, 11.500, '#fff', 'middle', 'font-family="Liberation Sans"') + `</svg>`;
}

/* mixer: number, header, body, name, name length, fader y, peaks, bar heights, clock, second caret */
const strips = [
  [18, '#625c7e', '#363547', 'ambient', 40, 1028, [891, 890], null, '#b4bcc0'],
  [19, '#7035a3', '#413448', 'ambient alien', 67, 1026, [906, 904], [6, 9], '#ffb93f'],
  [20, '#7035a3', '#413448', 'ambie..ormal', 65, 1039, null, null, '#ffb93f'],
  [21, '#7035a3', '#413448', 'ambien..glass', 69, 1019, [902, 908], [6, 6], '#ffb93f'],
  [22, '#7035a3', '#413448', 'Bl Nightsong', 66, 1024, [904, 905], [5, 6], '#ffb93f'],
  [23, '#9735a0', '#483347', 'FAT 48', 35, 1041, null, null, '#ffb93f', 1],
  [24, '#735a82', '#413448', 'ambie..group', 65, 1029, [894, 895], [10, 16], '#65bdf2', 1],
  [25, '#359c9e', '#354746', 'Hive plucks', 56, 1021, [928, 927], null, '#ffb93f'],
  [26, '#359c9e', '#354746', 'Massiv..lucks', 66, 1045, [893, 887], [12, 14], '#ffb93f', 1],
  [27, '#359c9e', '#354746', 'Norma..intro', 63, 1042, null, null, '#a0abae']
];
$('mixer').innerHTML = strips.map(([n, hc, bc, name, nl, fy, pk, bars, clock, up]) => {
  let s = R(0, 857, 44, 386, bc) + `<path d="M0 857h44v114q0 8-8 8H8q-8 0-8-8z" fill="url(#dk)"/>` + R(42, 857, 1.5, 386, '#0000001a') + R(0, 857, 44, 1, '#0002');
  s += `<text transform="translate(17.500 933) rotate(-90)" textLength="${nl}" lengthAdjust="spacingAndGlyphs" font-size="13.500" fill="#c6c2ce">${name}</text>`;
  s += R(25.5, 862.5, 13, 72, '#343d43', 'rx="1" stroke="#1d252a"') + R(27, 874, 10, 1, '#262e33') + R(27, 885, 10, 1, '#262e33');
  if (pk) s += R(26.500, pk[0] - .5, 5, 1.600, '#c4a93c') + R(32.500, pk[1] - .5, 5, 1.600, '#c4a93c');
  if (bars) s += R(26.500, 934 - bars[0], 5, bars[0], '#a5d93c') + R(32.500, 934 - bars[1], 5, bars[1], '#a5d93c');
  s += `<circle cx="22" cy="949" r="5.500" fill="#252c28" stroke="#777d80"/><circle cx="22" cy="949" r="3.500" fill="#9aec3a"/><circle cx="22" cy="949" r="1.500" fill="#d6ff8a"/>`;
  s += `<circle cx="22" cy="979" r="14.500" fill="${bc}" stroke="#0000003a"/><circle cx="22" cy="979" r="10.500" fill="#3a4348" stroke="#1a2125"/>`;
  s += `<g fill="#b9bfc2"><path d="M7 1006l5-5 5 5zM7 1008h10l-5 5zM11 1019v10l-5-5zM13 1019v10l5-5z"/><circle cx="12" cy="1167" r="3"/><path d="M17 1210q4-2 5-6 1 4 5 6z"/>${up ? '<path d="M18 1193q3-1 4-4 1 3 4 4z"/>' : ''}</g>`;
  s += `<circle cx="12" cy="1044" r="8.500" fill="none" stroke="#0000003a"/><circle cx="12" cy="1044" r="5.500" fill="#3a4348" stroke="#20272b"/>`;
  s += R(30.500, 1006.500, 3, 161, '#0000002a', 'stroke="#0000003a"');
  for (const y of [1039, 1071, 1100, 1123]) s += R(24, y, 4, 1, '#0005') + R(36, y, 4, 1, '#0005');
  s += R(26, fy - 10, 13, 25, '#0004', 'rx="2"') + R(25.5, fy - 12, 13, 24, '#74777c', 'rx="2"') + R(26.500, fy - 11, 11, 10, '#c9cbd2', 'rx="1"') + R(26, fy, 12, 2, '#33373a') + R(27, fy + 4, 10, 5, '#3d4043');
  s += `<path d="M7.500 1132v-6q0-3 3-4h3q3 1 3 4v6" fill="none" stroke="${n === 18 ? '#7d8188' : '#ef8a3a'}" stroke-width="1.500"/><path d="M8 1124l4-5 4 5zM11 1127h2v7h-2zM10 1130h4v1.500h-4z" fill="#ffc23f"/>`;
  s += `<circle cx="12" cy="1148" r="5.200" fill="none" stroke="${clock}" stroke-width="1.600"/><path d="M12 1145v3.500h2.500" fill="none" stroke="${clock}" stroke-width="1.200"/>`;
  if (n === 21) s += R(18, 1237, 22, 3, '#1a2326');
  return `<div class="strip"><header style="background:${hc}"><span data-w="11" data-c="1">${n}</span></header><svg viewBox="0 857 44 386"><defs><linearGradient id="dk" x2="0" y2="1"><stop stop-color="#0000"/><stop offset="1" stop-color="#0004"/></linearGradient></defs>${s}</svg></div>`;
}).join('');

/* picker */
const teal = ['linear-gradient(#2f797a,#28706f)', '#b2efec'], olive = ['linear-gradient(#737d33,#6a762c)', '#e9efaa'], purp = ['linear-gradient(#542b7b,#4b2470)', '#d3b2ee'], slate = ['linear-gradient(#4c545b,#464e55)', '#ccd4d8'], grn = ['linear-gradient(#2f7d62,#287356)', '#a9ecd2'], moss = ['linear-gradient(#46692a,#3d5d20)', '#c4e793'], brick = ['linear-gradient(#7c2f32,#70282b)', '#f3b3b3'], navy = ['linear-gradient(#2a3c7c,#243470)', '#b0c3f7'];
const items = [['FAT 48', 34, slate], ['FAT 48 end', 59, slate], ['Stardust', 46, teal], ['Ambient so..nder lounge', 118, moss], ['future synth', 68, grn], ['future synth end', 93, grn], ['ambient (Alien + glass)', 118, purp], ['ambient (Ali..glass) end', 118, purp], ['ambient (bl nightsong)', 118, purp], ['Other Drums', 68, olive], ['Other Drums #4', 86, olive], ['Other Drums #2', 85, olive], ['Other Drums #3', 85, olive], ['head drums', 65, olive], ['head drums #3', 82, olive], ['head drums #2', 82, olive], ['massive plucks', 83, teal], ['massive plucks end', 108, teal], ['Massive plucks intro', 113, teal], ['Massive plucks switchup', 118, teal], ['Massive plucks melody', 118, teal], ['Massive plucks intro #2', 118, teal], ['Hive plucks Intro', 94, teal], ['Hive plucks switchup', 116, teal], ['Hive plucks Intro #2', 112, teal], ['Hive plucks', 63, teal], ['flute', 25, brick], ['flute end', 50, brick], ['oh yeah', 44, navy], ['', 1, olive]];
$('picklist').innerHTML = items.map(([t, w, c]) => {
  let s = '';
  if (c === slate) s = R(0, 0, 135, 2, '#fff') + R(0, 10, 135, 2, '#fff') + R(0, 25, 135, 2, '#fff');
  else if (c === moss) s = R(113, 1, 21, 1.500, '#fff') + R(31, 24, 20, 1.500, '#fff') + R(72, 18, 20, 1.500, '#fff');
  else if (t.startsWith('Other')) s = R(0, 20, 135, 2.5, '#dfe88a');
  else if (t.startsWith('head')) for (let x = 1; x < 130; x += 9) s += R(x, 20, 5, 2, '#dfe88a');
  else if (t === 'flute') s = '<path d="M2 22q8-9 18-6t20-6 15 6 24 0 24-2 28-9M12 26h16l16-6 14 6h20l24-2 26-12" fill="none" stroke="#fff" stroke-width="1.300" stroke-dasharray="9 1"/>';
  else if (t === 'flute end') s = R(125, 5, 5, 2, '#fff') + R(129, 11, 4, 2, '#fff') + R(0, 25, 33, 2, '#fff');
  else if (t === 'oh yeah') s = R(66, 7, 11, 4, '#fff') + R(79, 7, 9, 4, '#fff') + R(91, 7, 6, 4, '#fff') + R(99, 7, 13, 4, '#fff') + R(113, 1, 4, 3, '#fff') + R(117, 13, 4, 3, '#fff') + R(125, 23, 4, 3, '#fff');
  else if (t === 'massive plucks') for (let x = 2; x < 132; x += 6) s += R(x, 1, 2, 2, '#fff') + R(x, 24, 2, 2, '#fff');
  else if (t === 'Stardust') for (const [x, y, z] of [[16, 1, 8], [83, 1, 8], [129, 1, 5], [96, 7, 4], [100, 10, 17], [123, 8, 10], [46, 14, 8], [66, 16, 17], [129, 17, 5], [24, 23, 8], [91, 23, 8]]) s += R(x, y, z, 3, '#cff');
  else if (t) { const long = c === grn || c === purp ? 18 : 5; for (let i = 0; i < 22 - long / 2; i++) s += R((rnd() * 128).toFixed(0), (2 + Math.floor(rnd() * 8) * 3), long, 1.500, '#cff'); }
  return `<div class="pi" style="background:${c[0]};color:${c[1]}"><svg class="bg" viewBox="0 0 135 28">${s}</svg>${t ? use('pat', 'ico') : ''}<span data-w="${w}">${t}</span></div>`;
}).join('');

/* track headers */
const heights = [74, 78].concat(Array(14).fill(56));
$('theads').innerHTML = heights.map((h, i) => `<div class="th" style="height:${h}px${i === 15 ? ';opacity:.5' : ''}"><span data-w="${i < 9 ? 38.500 : 45.500}">Track ${i + 1}</span><i class="dots"></i><i class="led"></i></div>`).join('');

/* minimap and ruler */
{
  let s = `<svg width="760" height="21" viewBox="704 314 760 21">` + R(704, 314, 19, 19, '#4c545a', 'stroke="#2b3338"') + `<path d="M716 319l-4.500 5 4.500 5" fill="none" stroke="#1e262b" stroke-width="1.500"/>` +
    R(724, 314, 613, 19.5, '#55636a') + R(724, 327, 596, 6.500, '#6fada8') + R(724, 322, 596, 3, '#4d8381') + R(724, 325.500, 596, 1.500, '#8c6a90') + R(724, 314.500, 95, 4, '#55803f') + R(819, 314.500, 501, 1.500, '#a1903f') + R(819, 317, 501, 1.500, '#427e82');
  for (const x of [832, 873, 940, 1118, 1177, 1274]) s += R(x, 314.500, 24, 1.500, '#b0633f');
  for (const [x, w] of [[866, 48], [1058, 47], [1153, 48], [1225, 70]]) s += R(x, 320, w, 2, '#4b4da0');
  for (const [x, w] of [[914, 47], [1130, 23], [1201, 24]]) s += R(x, 316, w, 4, '#3d9a97');
  for (const x of [819, 914, 1010, 1105, 1201]) s += R(x, 315, 1, 17, '#3d5055');
  s += R(1201, 320.500, 143, 1.500, '#8a4650') + R(1336.500, 314, 1, 19.500, '#7a868c') + `</svg>`;
  $('mini').innerHTML = s;
}
const BAR = 7.365;
{
  let s = '';
  for (let n = 1; n <= 97; n += 4) s += `<span data-w="${n < 10 ? 5 : 11}" style="left:${(n === 1 ? 1 : (n - 1) * BAR + (n < 10 ? 1 : 0)).toFixed(1)}px">${n}</span>`;
  $('ruler').innerHTML = s + '<i class="mark"></i>';
}

/* clip contents; every note list is [x, y, width] in thirds of a pixel */
const nt = (a, ox, oy, h = 2, f = '#8fb295', sx = 1) => a.map(([x, y, w]) => R(((x - ox) / 3 * sx).toFixed(1), ((y - oy) / 3 - h / 2).toFixed(1), (w / 3 * Math.max(sx, .8)).toFixed(1), h, f)).join('');
const main = [[457, 94, 6], [480, 105, 4], [418, 121, 8], [396, 150, 8], [441, 139, 17], [463, 144, 17], [426, 160, 14], [457, 160, 6], [480, 172, 4], [405, 189, 20], [396, 217, 8], [441, 206, 14], [463, 211, 17], [426, 229, 14], [405, 256, 12]];
const main2 = [[22, 138, 8], [42, 105, 10], [98, 94, 6], [102, 105, 4], [66, 125, 18], [86, 131, 12], [107, 138, 8], [50, 150, 14], [132, 150, 8], [188, 105, 8], [176, 120, 10], [165, 150, 14], [152, 162, 12], [30, 181, 20], [56, 181, 10], [100, 170, 4], [104, 181, 4], [118, 181, 14], [140, 181, 14], [186, 181, 12], [176, 193, 10], [66, 199, 16], [88, 206, 16], [110, 211, 8], [50, 225, 14], [132, 225, 8], [165, 225, 14], [152, 238, 12], [30, 256, 14], [118, 256, 14], [140, 256, 14]];
const main3 = [[200, 150, 8], [222, 121, 8], [207, 189, 20], [245, 139, 17], [266, 144, 12], [276, 110, 6], [282, 121, 4], [288, 150, 8], [232, 160, 10], [262, 160, 4], [310, 160, 20], [316, 94, 14], [339, 121, 10], [354, 132, 8], [366, 105, 8], [330, 172, 22], [275, 177, 6], [280, 189, 4], [296, 189, 18], [346, 189, 8], [363, 189, 12], [200, 217, 8], [245, 206, 16], [264, 211, 12], [288, 217, 8], [354, 201, 8], [228, 229, 14], [310, 229, 14], [332, 240, 8], [207, 256, 14], [296, 256, 14]];
const melody = [[946, 549, 22], [925, 575, 20], [970, 565, 20], [990, 570, 20], [1013, 576, 8], [957, 586, 10], [1035, 549, 10], [1052, 559, 8], [1058, 565, 8], [1045, 586, 10], [1078, 549, 10], [1088, 560, 8], [1080, 575, 8], [1093, 575, 6], [1088, 586, 8], [1096, 597, 4]];
const intro = [[43, 170, 10], [88, 118, 10], [120, 97, 5], [125, 118, 5], [131, 77, 10], [153, 118, 10], [196, 139, 10], [220, 170, 10], [264, 118, 10], [295, 97, 5], [302, 118, 5], [307, 77, 10], [330, 118, 10], [346, 97, 9], [354, 66, 3], [359, 97, 3], [363, 118, 3], [373, 118, 5], [367, 139, 4], [378, 160, 6], [385, 170, 10]];
const half = (a, top) => a.map(([x, y, w]) => [x, top + (y - 57) * .5, w]);
const wave = (w, mid, fn, col) => {
  let up = '', dn = '';
  for (let x = 0; x <= w; x += .5) { const h = Math.max(.5, fn(x)); up += `L${x} ${(mid - h).toFixed(1)}`; dn = `L${x} ${(mid + h * .95).toFixed(1)}` + dn; }
  return `<path d="M0 ${mid}${up}${dn}z" fill="${col}"/>`;
};
const hits = (list, k) => x => Math.max(0, ...list.map(([p, a]) => x >= p ? a * Math.exp(-(x - p) / k) : a * Math.max(0, 1 - (p - x) / 1)));
const pluckHits = [[0, 20], [8, 18], [11, 12], [15, 14], [23, 21], [30, 16], [37, 20], [42, 11], [45, 16], [52, 18], [56, 12], [57.500, 10]];
const kinds = {
  main: () => nt(main, 396, 86, 2, '#97a983'),
  half: () => nt(main.filter(n => n[0] < 440), 396, 86, 2, '#97a983'),
  half2: () => nt(main.filter(n => n[0] >= 440), 440, 86, 2, '#97a983'),
  main2: () => nt(main2, 22, 86, 2, '#97a983'),
  main3: () => nt(main3, 200, 86, 2, '#97a983'),
  hat: w => { let s = R(0, 47, w, 6, '#7ea77d'); for (let x = 0; x < w; x += 1.5) if (rnd() > .5) s += R(x, 47, .8, 6, '#95c08e'); return s; },
  beat: w => { let s = R(0, 43, w, 7, '#7ba67c'); for (let x = 1; x < w; x += 1.500) { if (rnd() > .35) s += R(x, 1, .9, 7, '#5f7f6b'); if (rnd() > .6) s += R(x, 43, 1, 7, '#9bcb93'); } for (const x of [1, 3.500, 12]) s += R(x, 55, 1, 7, '#5f7f6b'); return s; },
  fill: w => R(0, 43, w - 5, 7, '#7ba67c') + R(w - 5, 47, 4, 6, '#7ba67c') + R(w - 5, 15, 1.500, 5, '#54705f') + R(w - 2.500, 15, 1.500, 5, '#54705f') + R(2, 1, 7, 7, '#54705f') + R(w - 3, 55, 1, 7, '#54705f'),
  tick: w => { let s = ''; for (let x = 0; x < w; x += 2.450) s += R(x.toFixed(1), 47.500, 1.200, 5, '#5f7d66'); return s; },
  melody: () => nt(melody, 925, 543, 1.700, '#8fbfa0') + nt(melody, 925, 482, 1.700, '#8fbfa0'),
  dense: () => [0, 40, 80].map(d => nt(melody, 925, 543 - d, 1.500, '#7fb090')).join(''),
  intro: () => nt(intro, 43, 57, 3.200, '#8fc0a0'),
  intro2: () => nt(intro, 43, 57, 3.200, '#8fc0a0', .5),
  double: () => nt(half(intro, 57), 43, 57, 1.600, '#8fc0a0') + nt(half(intro, 117), 43, 57, 1.600, '#8fc0a0'),
  mintro: () => nt(half(intro.filter(n => n[0] > 200), 57), 43, 57, 1.600, '#8fc0a0') + nt(half(intro, 117), 43, 57, 1.600, '#8fc0a0'),
  mass: w => { let s = ''; for (let x = 1; x < w; x += 2.400) s += R(x.toFixed(1), 37, 1, 4, '#55705f') + (Math.floor(x / 2.400) % 3 ? R(x.toFixed(1), 1, 1, 4, '#55705f') : ''); for (const [x, y] of [[14, 10], [0, 16], [28, 16], [8, 22], [37, 22], [22, 28], [43, 10], [50, 13]]) for (let i = 0; i < 3; i++) s += R(x + i * 2.400, y, 1, 3, '#648672'); return s; },
  amb: () => { const a = '#88a898', f = 1 / 2.613; return [[500, 258, 18], [518, 268, 38], [557, 279, 20], [578, 258, 18], [595, 268, 38], [633, 279, 18], [633, 232, 18], [500, 294, 154], [500, 320, 18], [518, 330, 38], [557, 341, 18], [578, 320, 18], [595, 330, 38]].map(([x, y, w]) => R(((x - 500) * f).toFixed(1), ((y - 226) / 3 - 1).toFixed(1), (w * f).toFixed(1), 2, a)).join(''); },
  song: () => R(0, 2, 29.500, 3.500, '#8faf9c') + R(59, 2, 29.500, 3.500, '#8faf9c') + R(0, 37, 29.500, 3.500, '#8faf9c') + R(59, 37, 29.500, 3.500, '#8faf9c'),
  yeah: () => R(14, 11, 11, 5, '#5e8274') + R(14, 11, 4, 5, '#88b0a0') + R(25, 1, 1, 6, '#54705f') + R(26, 20, 1, 6, '#54705f') + R(27.500, 35, 1, 6, '#54705f'),
  lounge: () => R(44, 26.500, 15, 2, '#8fb595') + R(15, 37.500, 15, 2, '#7c9c70'),
  thin: w => wave(w, 20, x => x < 98 ? .9 + rnd() * 1.200 : .4, '#82a060'),
  noise: w => wave(w, 21.500, () => 7.300 + rnd() * 1.600, '#8f989d'),
  star: w => wave(w, 20, x => 1 + Math.abs(Math.sin(x * .33) * 1.300) + (x > 40 && x < 47 ? 1.500 : 0) + rnd() * .9, '#6fbfc0'),
  pluck: w => wave(w, 20.500, hits(pluckHits, 2.200), '#b2c6c9'),
  normal: w => wave(w, 20.500, hits([[0, 18], [15, 15], [22, 6], [30, 12], [45, 19], [60, 14], [74, 15], [81, 5], [84, 10], [89, 15], [103, 14], [109, 9], [114, 8]], 3), '#b2c6c9'),
  rev: w => wave(w, 20.500, x => 3 + Math.sin(x * .42) * 1 + rnd() * 1.400, '#c8b8ad'),
  fut: w => wave(w, 20.500, () => 8.800 + rnd() * 2, '#74c1a6'),
  fade: w => wave(w, 20, x => Math.min(4.400, x * .17) + Math.min(1, x / 40) * rnd() * 1.400, '#c9b2c3')
};
const C = { red: ['#752c2e', '#ffb3ad'], yel: ['#6c7830', '#f3f8a4'], tl: ['#2a7375', '#b4efef'], gr: ['#40632a', '#c2e89a'], dg: ['#294a12', '#9edc5d'], pu: ['#50287a', '#ddb7f5'], bl: ['#25387a', '#b0c8ff'], gy: ['#546768', '#d5dfdf'], br: ['#6b5a51', '#e0d3cb'], mv: ['#684f5d', '#e2cdd6'], gg: ['#17604a', '#86e5b6'], st: ['#155d60', '#85dfdf'], dk: ['#363c41', '#d5dadc'] };
const each = (bars, step, ...r) => bars.map(b => [b, b + step, ...r]);
const tracks = [
  [[17, 19, 'red', 'pat', '', 0, 'half'], [19, 21, 'red', 'pat', '', 0, 'half2'], ...each([21, 25, 29, 33, 37, 41, 45], 4, 'red', 'pat', '', 0, 'main'), [49, 57, 'red', 'pat', 'mai..s #2', 43, 'main2'], [57, 65, 'red', 'pat', 'mai..s #3', 43, 'main3'], [65, 67, 'red', 'pat', '', 0, 'half'], [67, 69, 'red', 'pat', '', 0, 'half2'], ...each([69, 73, 77, 81, 85, 89, 93], 4, 'red', 'pat', '', 0, 'main')],
  [...each([17, 21, 25, 29], 4, 'yel', 'pat', '', 0, 'hat'), ...each([33, 37, 39, 41, 43, 45, 49, 51, 53, 55, 57, 59, 61, 63], 2, 'yel', 'pat', '', 0, 'beat'), ...each([35, 47], 2, 'yel', 'pat', '', 0, 'fill'), ...each([65, 69, 73, 77], 4, 'yel', 'pat', '', 0, 'tick'), ...each([81, 85, 87, 89, 91, 93, 95], 2, 'yel', 'pat', '', 0, 'beat'), [83, 85, 'yel', 'pat', '', 0, 'fill']],
  each([41, 81, 89], 8, 'tl', 'pat', 'Mas..lody', 43, 'melody'),
  each([1, 9], 8, 'gr', 'pat', 'Amb..nge', 43, 'lounge'),
  [[1, 17, 'dg', 'aud', 'Ambient s..der lounge', 102, 'thin'], ...each([65, 69, 73, 77, 81, 85, 89], 4, 'dk', 'aud', '', 0, 'noise')],
  [[1, 17, 'tl', 'pat', 'Hive plucks Intro', 85, 'intro'], ...each([33, 41, 81], 8, 'tl', 'pat', 'Hiv..ucks', 43, 'dense'), [49, 65, 'tl', 'pat', 'Hive plucks switchup', 102, 'double'], [73, 81, 'tl', 'pat', 'Hive...#2', 40, 'intro2']],
  each([33, 41, 65, 73, 81], 8, 'st', 'aud', 'Stardust', 41, 'star'),
  [...each([33, 41, 81], 8, 'gy', 'aud', 'plucks', 32, 'pluck'), [73, 81, 'tl', 'pat', 'Mas..o #2', 42, 'intro2']],
  [[1, 17, 'gy', 'aud', 'Plucks normal reverb', 101, 'normal'], ...each([33, 65], 16, 'br', 'aud', 'plucks reverb', 67, 'rev')],
  each([33, 41, 65, 73], 8, 'gg', 'aud', 'futu..nth', 43, 'fut'),
  [[1, 17, 'tl', 'pat', 'Massive plucks intro', 101, 'mintro'], ...each([17, 33, 41, 65, 73], 8, 'tl', 'pat', 'mass..cks', 43, 'mass'), [25, 33, 'tl', 'pat', 'mas..cks', 43, 'mass'], [49, 65, 'tl', 'pat', 'Massive pl..s switchup', 102, 'double']],
  [[1, 17, 'mv', 'aud', 'Outro musi..nd fade in', 101, 'fade'], ...each([25, 33, 41, 57, 65, 73], 8, 'pu', 'pat', 'ambi..ss)', 42, 'amb')],
  each([33, 69], 12, 'pu', 'pat', 'ambien..tsong)', 73, 'song'),
  each([25, 29, 57, 61], 4, 'bl', 'pat', '', 0, 'yeah'),
  [], []
];
const gridLines = w => { let s = ''; for (let x = BAR * 2; x < w - 2; x += BAR * 2) s += R(x.toFixed(1), 0, 1, 70, '#17232b'); return s; };
const bg = (() => { let s = ''; for (let b = 0; b < 104; b += 2) s += (b % 32 < 16 ? '' : R(b * BAR, 0, BAR * 2, 920, '#2e3d48')) + R((b * BAR).toFixed(1), 0, 1.200, 920, '#15232c'); return `<svg style="position:absolute" width="760" height="920">${s}</svg>`; })();
$('lanes').innerHTML = bg + heights.map((h, i) => {
  let extra = '';
  if (i === 2) extra = `<svg style="position:absolute" width="120" height="56">${[[37, 1], [66, 2], [103, 1]].map(([x, w]) => R(x, 1, w, 15, '#6d5365') + R(x, 22, w, 27, '#d0bccb')).join('')}</svg>`;
  return `<div class="lane" style="height:${h}px">${extra}` + tracks[i].map(([a, b, c, ic, label, lw, kind]) => {
    const x = Math.round((a - 1) * BAR), w = Math.round((b - 1) * BAR) - x;
    return `<div class="clip" style="left:${x}px;width:${w}px"><header style="background-color:${C[c][0]};color:${C[c][1]}"><svg class="ico ${ic}"${kind === 'fill' ? ' opacity=".5"' : ''}><use href="#i-${ic}"/></svg>${label ? `<span data-w="${lw}">${label}</span>` : ''}</header><svg width="${w}" height="${h - 15}">${gridLines(w)}${kinds[kind](w)}</svg></div>`;
  }).join('') + '</div>';
}).join('') + '<i class="head"></i>';

/* squeeze labels to the narrow interface face */
document.querySelectorAll('[data-w]').forEach(el => {
  const want = +el.dataset.w, have = el.offsetWidth;
  if (!have || !el.textContent) return;
  el.style.transform = `scaleX(${want / have})`;
  if (!el.dataset.c && getComputedStyle(el).position !== 'absolute') el.style.marginRight = `${want - have}px`;
});
```
